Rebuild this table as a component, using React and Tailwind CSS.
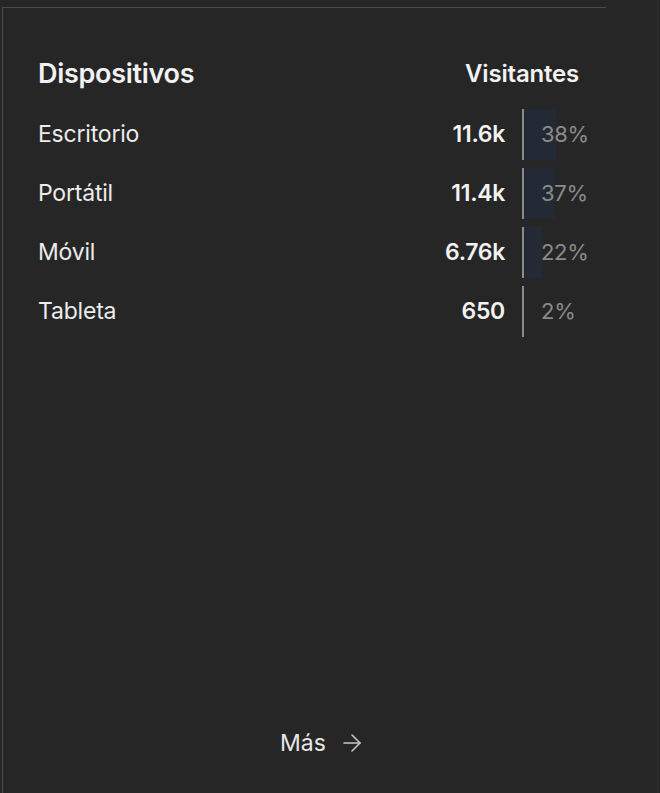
import React from "react";

const rows = [
  { label: "Escritorio", value: "11.6k", pct: 38 },
  { label: "Portátil", value: "11.4k", pct: 37 },
  { label: "Móvil", value: "6.76k", pct: 22 },
  { label: "Tableta", value: "650", pct: 2 },
];

export default function App() {
  return (
    <div
      className="w-[660px] h-[793px] bg-[#262626] flex overflow-hidden"
      style={{ fontFamily: "Inter, 'Liberation Sans', sans-serif" }}
    >
      <div className="ml-[2px] mt-[7px] w-[604px] border-l border-t border-[#4a4a4a] flex flex-col pl-[35px] pr-[27px] pt-[50px] pb-[35px]">
        <div className="flex items-center justify-between h-[32px]">
          <span className="text-[27px] font-semibold text-[#f2f2f2] tracking-[-0.3px]">
            Dispositivos
          </span>
          <span className="text-[24px] font-semibold text-[#f2f2f2] tracking-[-0.2px]">
            Visitantes
          </span>
        </div>
        <div className="mt-[19px] flex flex-col gap-[8px]">
          {rows.map((r) => (
            <div key={r.label} className="flex items-center h-[51px]">
              <span className="flex-1 text-[23px] text-[#ececec] tracking-[-0.2px]">
                {r.label}
              </span>
              <span className="text-[23px] font-semibold text-[#f2f2f2] tracking-[-0.3px] pr-[17px]">
                {r.value}
              </span>
              <div className="relative w-[57px] h-full border-l-2 border-[#8a8a8a] flex items-center">
                <div
                  className="absolute left-0 top-0 h-full bg-[#232a35]"
                  style={{ width: `${r.pct * 0.9 - 2}px` }}
                />
                <span className="relative pl-[17px] text-[22px] text-[#8a8a8a] tracking-[-0.3px]">
                  {r.pct}%
                </span>
              </div>
            </div>
          ))}
        </div>
        <div className="mt-auto flex items-center justify-center gap-[17px] h-[30px] pl-[24px]">
          <span className="text-[23px] text-[#e6e6e6]">Más</span>
          <svg width="18" height="20" viewBox="0 0 18 20" fill="none" stroke="#c8c8c8" strokeWidth="1.6" strokeLinecap="round" strokeLinejoin="round">
            <path d="M1 10h16" />
            <path d="M9 2l8 8-8 8" />
          </svg>
        </div>
      </div>
      <div className="flex-1" />
      <div className="w-px bg-[#2e2e2e] mr-[2px]" />
    </div>
  );
}
